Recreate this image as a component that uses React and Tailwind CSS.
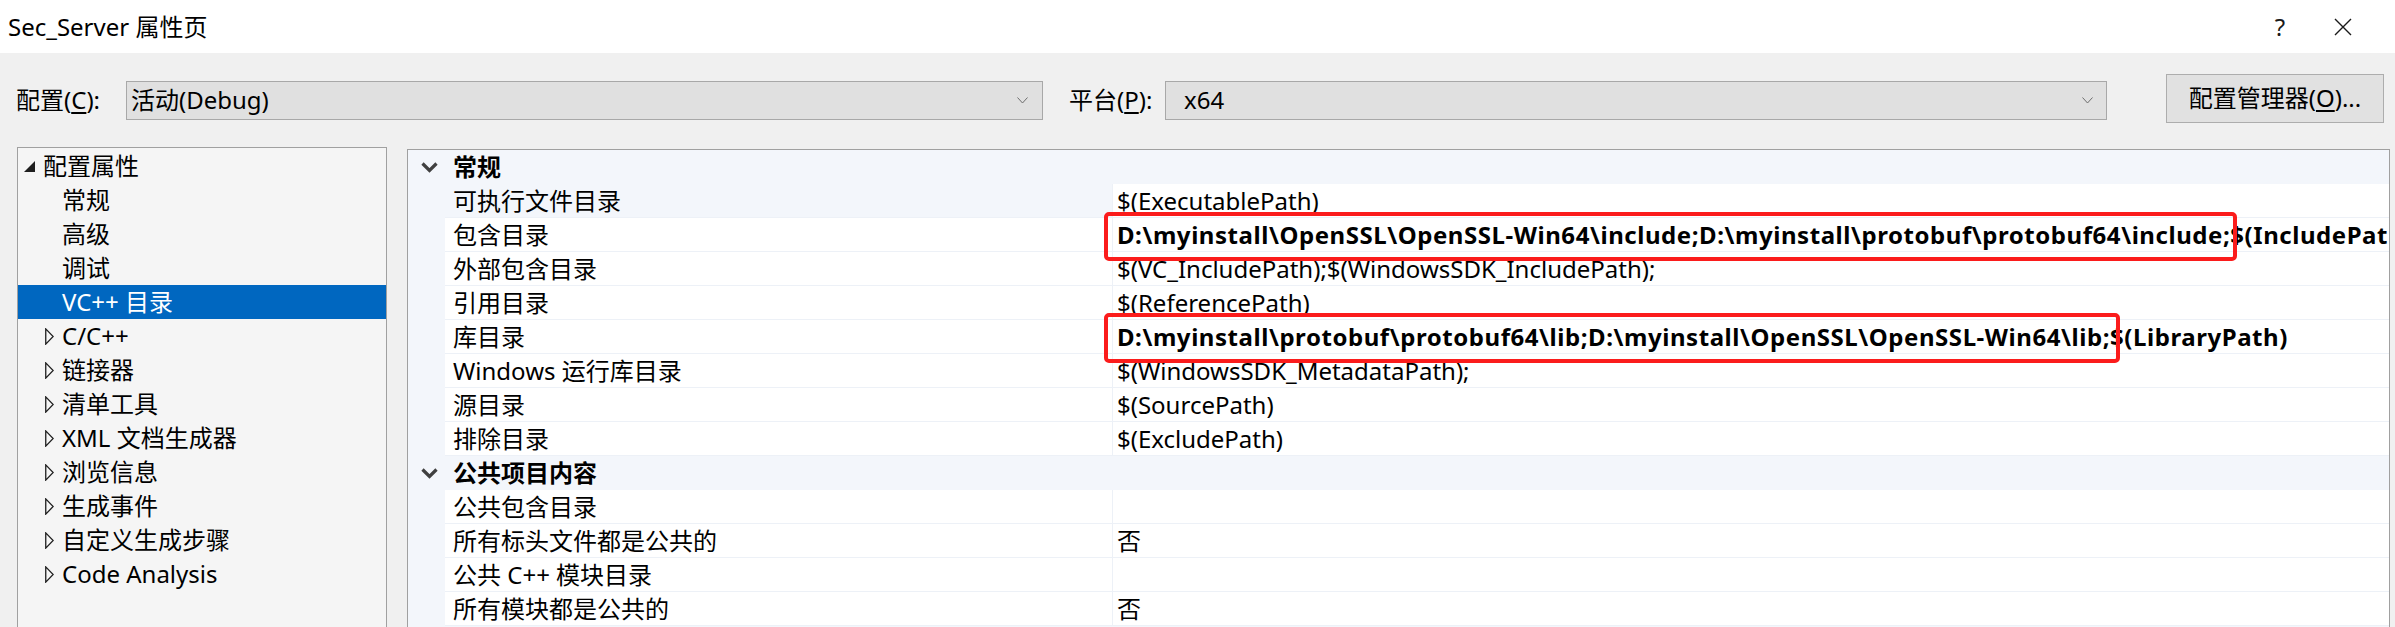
import React from "react";

const font = "font-['Noto_Sans','Noto_Sans_CJK_SC',sans-serif]";

function Chevron() {
  return (
    <svg width="11" height="7" viewBox="0 0 11 7" className="shrink-0">
      <path d="M0.5 0.5 L5.5 6 L10.5 0.5" fill="none" stroke="#6d6d6d" strokeWidth="1" />
    </svg>
  );
}

function GroupChevron() {
  return (
    <svg width="17" height="11" viewBox="0 0 17 11" className="shrink-0">
      <path d="M1.5 1.5 L8.5 8.5 L15.5 1.5" fill="none" stroke="#404040" strokeWidth="3.2" />
    </svg>
  );
}

function Collapsed() {
  return (
    <svg width="9" height="17" viewBox="0 0 9 17" className="shrink-0">
      <path d="M0.75 0.9 L8.2 8.5 L0.75 16.1 Z" fill="none" stroke="#1e1e1e" strokeWidth="1.3" />
    </svg>
  );
}

function Expanded() {
  return (
    <svg width="11" height="11" viewBox="0 0 11 11" className="shrink-0">
      <path d="M11 0 L11 11 L0 11 Z" fill="#1e1e1e" />
    </svg>
  );
}

const tree = [
  { label: "常规" },
  { label: "高级" },
  { label: "调试" },
  { label: "VC++ 目录", selected: true },
  { label: "C/C++", sub: true },
  { label: "链接器", sub: true },
  { label: "清单工具", sub: true },
  { label: "XML 文档生成器", sub: true },
  { label: "浏览信息", sub: true },
  { label: "生成事件", sub: true },
  { label: "自定义生成步骤", sub: true },
  { label: "Code Analysis", sub: true },
];

const general = [
  { name: "可执行文件目录", value: "$(ExecutablePath)", current: true },
  { name: "包含目录", value: "D:\\myinstall\\OpenSSL\\OpenSSL-Win64\\include;D:\\myinstall\\protobuf\\protobuf64\\include;$(IncludePath)", bold: true },
  { name: "外部包含目录", value: "$(VC_IncludePath);$(WindowsSDK_IncludePath);" },
  { name: "引用目录", value: "$(ReferencePath)" },
  { name: "库目录", value: "D:\\myinstall\\protobuf\\protobuf64\\lib;D:\\myinstall\\OpenSSL\\OpenSSL-Win64\\lib;$(LibraryPath)", bold: true },
  { name: "Windows 运行库目录", value: "$(WindowsSDK_MetadataPath);" },
  { name: "源目录", value: "$(SourcePath)" },
  { name: "排除目录", value: "$(ExcludePath)" },
];

const shared = [
  { name: "公共包含目录", value: "" },
  { name: "所有标头文件都是公共的", value: "否" },
  { name: "公共 C++ 模块目录", value: "" },
  { name: "所有模块都是公共的", value: "否" },
];

function GroupRow({ title }) {
  return (
    <div className="h-[34px] flex items-center bg-[#f3f6fb]">
      <div className="w-[37px] pl-[13px] flex items-center">
        <GroupChevron />
      </div>
      <div className="pl-[8px] font-bold">{title}</div>
    </div>
  );
}

function PropRow({ row }) {
  return (
    <div className="h-[34px] flex">
      <div className="w-[37px] shrink-0 bg-[#f3f6fb]" />
      <div
        className={
          "w-[667px] shrink-0 pl-[8px] flex items-center border-b border-[#edf1f7] whitespace-nowrap " +
          (row.current ? "bg-[#f3f6fb]" : "bg-white")
        }
      >
        {row.name}
      </div>
      <div
        className={
          "flex-1 min-w-0 overflow-hidden pl-[4px] flex items-center border-l border-b border-[#edf1f7] bg-white whitespace-nowrap " +
          (row.bold ? "font-bold tracking-[0.55px]" : "")
        }
      >
        {row.value}
      </div>
    </div>
  );
}

export default function App() {
  return (
    <div className={"w-[2395px] h-[627px] overflow-hidden bg-[#f0f0f0] text-black text-[24px] leading-none " + font}>
      {/* title bar */}
      <div className="h-[53px] bg-white flex items-center">
        <div className="pl-[8px] flex-1">Sec_Server 属性页</div>
        <div className="w-[46px] text-center text-[#1a1a1a]">?</div>
        <div className="w-[92px] flex justify-center pr-[12px]">
          <svg width="18" height="18" viewBox="0 0 18 18">
            <path d="M1 1 L17 17 M17 1 L1 17" stroke="#1a1a1a" strokeWidth="1.4" />
          </svg>
        </div>
      </div>

      {/* configuration row */}
      <div className="h-[94px] flex items-center pl-[16px]">
        <div className="w-[110px] whitespace-nowrap">
          配置(<span className="underline underline-offset-[3px]">C</span>):
        </div>
        <div className="w-[917px] h-[39px] bg-[#e0e0e0] border border-[#a8a8a8] flex items-center justify-between pl-[4px] pr-[14px]">
          <span>活动(Debug)</span>
          <Chevron />
        </div>
        <div className="ml-[26px] w-[96px] whitespace-nowrap">
          平台(<span className="underline underline-offset-[3px]">P</span>):
        </div>
        <div className="w-[942px] h-[39px] bg-[#e0e0e0] border border-[#a8a8a8] flex items-center justify-between pl-[18px] pr-[13px]">
          <span>x64</span>
          <Chevron />
        </div>
        <div className="ml-[59px] w-[218px] h-[49px] bg-[#e1e1e1] border border-[#adadad] flex items-center justify-center whitespace-nowrap -mt-[4px]">
          配置管理器(<span className="underline underline-offset-[3px]">O</span>)...
        </div>
      </div>

      {/* body */}
      <div className="flex items-start">
        {/* tree */}
        <div className="ml-[17px] w-[370px] h-[490px] border border-[#a0a0a0] bg-[#f5f5f5] pt-[1px]">
          <div className="h-[34px] flex items-center pl-[6px] gap-[8px]">
            <Expanded />
            <span>配置属性</span>
          </div>
          {tree.map((t) => (
            <div
              key={t.label}
              className={
                "h-[34px] flex items-center whitespace-nowrap " +
                (t.selected ? "bg-[#0067c0] text-white " : "") +
                (t.sub ? "pl-[27px] gap-[8px]" : "pl-[44px]")
              }
            >
              {t.sub && <Collapsed />}
              <span>{t.label}</span>
            </div>
          ))}
        </div>

        {/* property grid */}
        <div className="relative ml-[20px] mt-[2px] w-[1983px] h-[490px] border border-[#a0a0a0] bg-[#f3f6fb]">
          <GroupRow title="常规" />
          {general.map((r) => (
            <PropRow key={r.name} row={r} />
          ))}
          <GroupRow title="公共项目内容" />
          {shared.map((r) => (
            <PropRow key={r.name} row={r} />
          ))}

          {/* highlight boxes */}
          <div className="absolute left-[696px] top-[62px] w-[1133px] h-[49px] border-[4px] border-[#fb1c1c] rounded-[5px]" />
          <div className="absolute left-[696px] top-[163px] w-[1016px] h-[50px] border-[4px] border-[#fb1c1c] rounded-[5px]" />
        </div>
      </div>
    </div>
  );
}
